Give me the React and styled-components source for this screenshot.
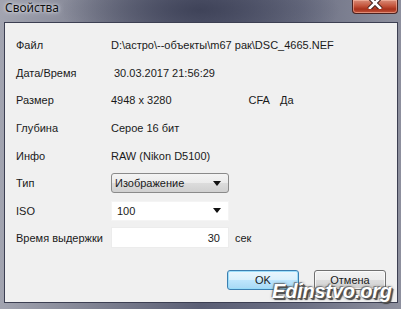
import React from "react"
import styled, { createGlobalStyle } from "styled-components"

const GlobalStyle = createGlobalStyle`
  html, body {
    margin: 0;
    padding: 0;
    background: #50546a;
  }
  * {
    box-sizing: border-box;
  }
`

const Window = styled.div`
  position: relative;
  width: 401px;
  height: 309px;
  display: flex;
  flex-direction: column;
  padding: 0 3px 6px 4px;
  overflow: hidden;
  background:
    radial-gradient(ellipse 140px 40px at 200px 10px, rgba(60, 64, 86, 0.9), rgba(60, 64, 86, 0) 100%),
    linear-gradient(90deg, #a2a4b0 0%, #7d8090 25%, #5a5e74 50%, #6c7084 75%, #8e909e 100%);
  font-family: "Liberation Sans", Arial, sans-serif;
  font-size: 11px;
  color: #1a1a1a;
`

const TitleBar = styled.div`
  height: 22px;
  display: flex;
  align-items: flex-start;
  justify-content: space-between;
`

const Title = styled.span`
  margin: 0 0 0 1px;
  font-family: "Noto Sans", "DejaVu Sans", sans-serif;
  font-size: 12px;
  line-height: 16px;
  color: #111;
  text-shadow: 0 0 6px rgba(230, 232, 240, 0.9), 0 0 3px rgba(230, 232, 240, 0.9);
`

const CloseButton = styled.div`
  width: 46px;
  height: 14px;
  border: 1px solid #4a2220;
  border-top: none;
  border-radius: 0 0 4px 4px;
  background: linear-gradient(180deg, #d98c78 0%, #c4553c 45%, #a8321c 70%, #c4553c 100%);
  box-shadow: inset 0 0 0 1px rgba(255, 200, 180, 0.5);
  display: flex;
  justify-content: center;
  align-items: flex-start;
`

const Client = styled.div`
  flex: 1;
  border: 1px solid #3c3f52;
  background: #f0f0f0;
  display: flex;
  flex-direction: column;
  padding: 8px 0 0 11px;
`

const Form = styled.div`
  display: flex;
  flex-direction: column;
`

const Row = styled.div`
  height: ${(p) => p.h || 27.7}px;
  display: flex;
  align-items: center;
`

const Label = styled.span`
  width: 95px;
  flex: none;
`

const Value = styled.span`
  padding-left: ${(p) => p.indent || 0}px;
  white-space: nowrap;
`

const Extra = styled.span`
  margin-left: ${(p) => p.gap}px;
`

const ComboButton = styled.div`
  width: 118px;
  height: 20px;
  border: 1px solid #8a8a8a;
  border-radius: 3px;
  background: linear-gradient(180deg, #f4f4f4 0%, #ebebeb 50%, #dcdcdc 51%, #d0d0d0 100%);
  display: flex;
  align-items: center;
  justify-content: space-between;
  padding: 0 7px 0 3px;
`

const ComboField = styled.div`
  width: 118px;
  height: 20px;
  background: #fff;
  border: 1px solid #f4f4f4;
  display: flex;
  align-items: center;
  justify-content: space-between;
  padding: 0 7px 0 5px;
`

const Arrow = styled.span`
  width: 0;
  height: 0;
  border-left: 4px solid transparent;
  border-right: 4px solid transparent;
  border-top: 5px solid #111;
`

const NumberField = styled.div`
  width: 118px;
  height: 21px;
  background: #fff;
  border: 1px solid #ececec;
  display: flex;
  align-items: center;
  justify-content: flex-end;
  padding-right: 8px;
`

const Unit = styled.span`
  margin-left: 6px;
`

const Buttons = styled.div`
  margin-top: auto;
  display: flex;
  justify-content: flex-end;
  gap: 15px;
  padding: 0 11px 12px 0;
`

const Button = styled.div`
  width: 72px;
  height: 20px;
  border-radius: 3px;
  display: flex;
  align-items: center;
  justify-content: center;
  border: 1px solid ${(p) => (p.primary ? "#3c7fb1" : "#707070")};
  background: ${(p) =>
    p.primary
      ? "linear-gradient(180deg, #eaf6fd 0%, #d9f0fc 50%, #bee6fd 51%, #a7d9f5 100%)"
      : "linear-gradient(180deg, #f2f2f2 0%, #ebebeb 50%, #dddddd 51%, #cfcfcf 100%)"};
  box-shadow: inset 0 0 0 1px ${(p) => (p.primary ? "rgba(150, 220, 250, 0.9)" : "rgba(255, 255, 255, 0.7)")};
`

const Watermark = styled.div`
  position: absolute;
  left: 272px;
  top: 279px;
  font-family: "Liberation Sans", Arial, sans-serif;
  font-weight: bold;
  font-style: italic;
  font-size: 20px;
  line-height: 24px;
  letter-spacing: -0.2px;
  color: #fff;
  text-shadow:
    1px 1px 0 #555,
    2px 2px 1px #444,
    -1px -1px 0 rgba(90, 90, 90, 0.6),
    0 0 3px rgba(40, 40, 40, 0.8);
`

const CloseGlyph = () => (
  <svg width="16" height="9" viewBox="0 0 16 9">
    <path d="M2 -3 L8 3 L14 -3 M2 9 L8 3 L14 9" stroke="#3a1a16" strokeWidth="4.5" fill="none" />
    <path d="M2 -3 L8 3 L14 -3 M2 9 L8 3 L14 9" stroke="#fff" strokeWidth="2.6" fill="none" />
  </svg>
)

const rows = [
  { label: "Файл", value: "D:\\астро\\--объекты\\m67 рак\\DSC_4665.NEF" },
  { label: "Дата/Время", value: "30.03.2017 21:56:29", indent: 3 },
  { label: "Размер", value: "4948 x 3280", extra: true },
  { label: "Глубина", value: "Серое 16 бит" },
  { label: "Инфо", value: "RAW (Nikon D5100)" },
]

export default function App() {
  return (
    <>
      <GlobalStyle />
      <Window>
        <TitleBar>
          <Title>Свойства</Title>
          <CloseButton>
            <CloseGlyph />
          </CloseButton>
        </TitleBar>
        <Client>
          <Form>
            {rows.map((r) => (
              <Row key={r.label}>
                <Label>{r.label}</Label>
                <Value indent={r.indent}>{r.value}</Value>
                {r.extra && (
                  <>
                    <Extra gap={77}>CFA</Extra>
                    <Extra gap={10}>Да</Extra>
                  </>
                )}
              </Row>
            ))}
            <Row>
              <Label>Тип</Label>
              <ComboButton>
                <span>Изображение</span>
                <Arrow />
              </ComboButton>
            </Row>
            <Row h={27}>
              <Label>ISO</Label>
              <ComboField>
                <span>100</span>
                <Arrow />
              </ComboField>
            </Row>
            <Row h={27}>
              <Label>Время выдержки</Label>
              <NumberField>30</NumberField>
              <Unit>сек</Unit>
            </Row>
          </Form>
          <Buttons>
            <Button primary>OK</Button>
            <Button>Отмена</Button>
          </Buttons>
        </Client>
        <Watermark>Edinstvo.org</Watermark>
      </Window>
    </>
  )
}
